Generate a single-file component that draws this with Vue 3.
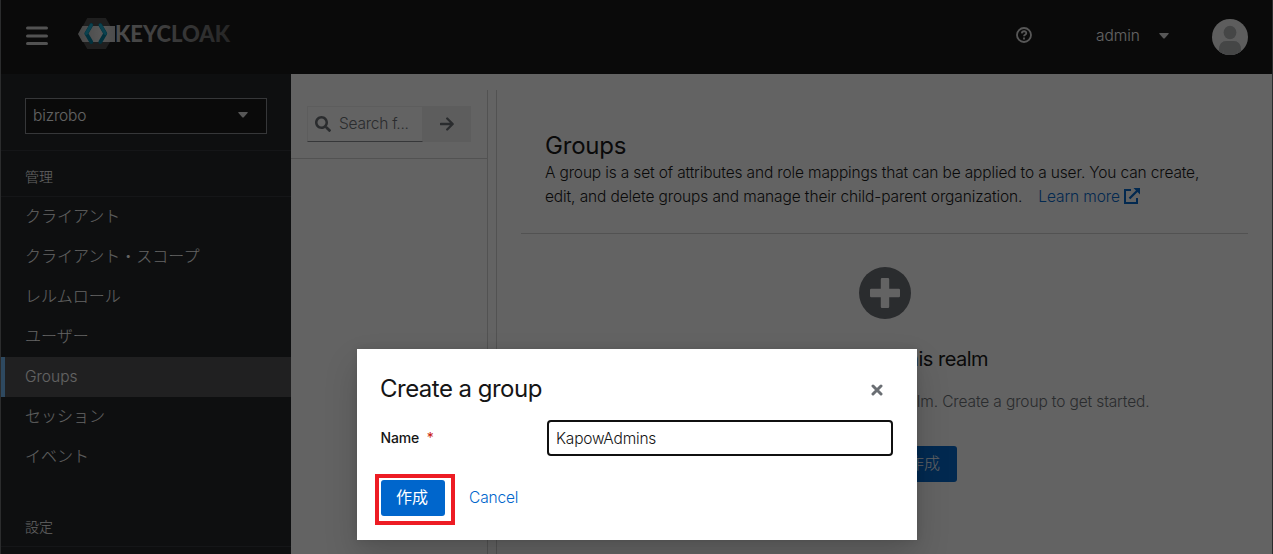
<script setup>
const manage = ['クライアント', 'クライアント・スコープ', 'レルムロール', 'ユーザー', 'Groups', 'セッション', 'イベント']
</script>

<template>
  <div class="page">
    <header class="masthead">
      <svg class="burger" width="22" height="20" viewBox="0 0 22 20"><path d="M1.5 2h19M1.5 10h19M1.5 17.500h19" /></svg>
      <svg class="logo" width="154" height="33" viewBox="0 0 154 33">
        <defs>
          <linearGradient id="word" x1="0" x2="1"><stop offset="0" stop-color="#c6c6c6" /><stop offset="1" stop-color="#5f5f5f" /></linearGradient>
          <linearGradient id="band" x1="0" x2="1"><stop offset="0" stop-color="#b5b5b5" /><stop offset=".6" stop-color="#e0e0e0" /><stop offset="1" stop-color="#c2c2c2" /></linearGradient>
        </defs>
        <path fill="#4d4d4d" d="M9.300 1h18.500L37 17 27.800 32H9.300L.5 17z" />
        <path fill="url(#band)" d="M4.500 9H37v16H4.500L0 17z" />
        <path fill="none" stroke="#007c9c" stroke-width="3.800" stroke-linejoin="round" stroke-linecap="round" d="M13.300 8 8.300 16.500l5 8.500M22.300 8l5 8.500-5 8.500" />
        <path fill="none" stroke="#1aa9cb" stroke-width="3" stroke-linecap="round" d="M13.300 8 8.300 16.500M22.300 8l5 8.500" />
        <text class="wordmark" x="37" y="25" textLength="115" lengthAdjust="spacingAndGlyphs" fill="url(#word)">KEYCLOAK</text>
      </svg>
      <div class="tools">
        <svg class="help" width="16" height="16" viewBox="0 0 16 16">
          <circle cx="8" cy="8" r="7" /><path d="M5.800 6.300c.3-2.800 4.600-2.600 4.500-.1 0 1.600-2.300 1.500-2.300 3" /><path d="M8 10.600v1.900" />
        </svg>
        <span class="user">admin</span>
        <svg class="caret" width="10" height="6" viewBox="0 0 10 6"><path d="M.7 0h8.600q.8.200.2 1L5.800 5.200q-.8.800-1.600 0L.5 1Q-.1.200.7 0z" /></svg>
        <svg class="avatar" width="36" height="36" viewBox="0 0 36 36">
          <defs><clipPath id="disc"><circle cx="18" cy="18" r="18" /></clipPath></defs>
          <circle cx="18" cy="18" r="18" fill="#f0f0f0" />
          <g clip-path="url(#disc)">
            <ellipse cx="18" cy="13.500" rx="6.400" ry="6.700" fill="#b0b2b4" />
            <path fill="#c4c6c8" d="M7 36v-5q0-9 8-9h6q8 0 8 9v5z" />
            <path fill="#b0b2b4" d="M7 36v-5q0-9 8-9h6q8 0 8 9v5h-3.500v-6l-1 6H12.500l-1-6v6z" />
          </g>
        </svg>
      </div>
    </header>

    <div class="body">
      <nav class="sidebar">
        <div class="realm-box">
          <div class="realm"><span class="realm-name">bizrobo</span>
            <svg class="caret" width="10" height="6" viewBox="0 0 10 6"><path d="M.7 0h8.600q.8.200.2 1L5.800 5.200q-.8.800-1.600 0L.5 1Q-.1.200.7 0z" /></svg>
          </div>
        </div>
        <h2 class="section">管理</h2>
        <ul class="items">
          <li v-for="item in manage" :key="item" :class="{ current: item === 'Groups' }">{{ item }}</li>
        </ul>
        <h2 class="section second">設定</h2>
      </nav>

      <aside class="tree">
        <div class="tree-head">
          <div class="search">
            <svg width="16" height="16" viewBox="0 0 512 512"><path d="M505 442.700L405.300 343c-4.500-4.500-10.600-7-17-7H372c27.600-35.300 44-79.700 44-128C416 93.100 322.900 0 208 0S0 93.100 0 208s93.100 208 208 208c48.300 0 92.700-16.400 128-44v16.300c0 6.400 2.500 12.500 7 17l99.700 99.700c9.400 9.400 24.600 9.400 33.900 0l28.300-28.300c9.400-9.400 9.400-24.600.1-34zM208 336c-70.700 0-128-57.200-128-128 0-70.700 57.200-128 128-128 70.700 0 128 57.200 128 128 0 70.700-57.200 128-128 128z" /></svg>
            <span>Search f...</span>
          </div>
          <div class="go">
            <svg width="14" height="14" viewBox="0 0 14 14"><path d="M.8 7H12M7.200 1.500 12.700 7l-5.500 5.500" /></svg>
          </div>
        </div>
      </aside>
      <div class="splitter"></div>

      <main class="main">
        <h1>Groups</h1>
        <p class="desc">
          <span class="lead">A group is a set of attributes and role mappings that can be applied to a user. You can create,</span><br>
          <span class="rest">edit, and delete groups and manage their child-parent organization.</span>
          <a class="learn">Learn more<svg width="16" height="16" viewBox="0 0 16 16"><path fill="none" stroke="currentColor" stroke-width="2" d="M7 2H1v13h12V10" /><path fill="none" stroke="currentColor" stroke-width="2.300" d="M5.500 10.500 13.500 2.500" /><path fill="currentColor" d="M9.500 0H16v6.500z" /></svg></a>
        </p>
        <hr>
        <section class="empty">
          <svg width="52" height="52" viewBox="0 0 52 52"><circle cx="26" cy="26" r="26" fill="#6a6e73" /><path fill="#fff" d="M23 11h6q1.200 0 1.200 1.200v9.600h9.600q1.200 0 1.200 1.200v6q0 1.200-1.200 1.200h-9.600v9.600q0 1.200-1.200 1.200h-6q-1.200 0-1.200-1.200v-9.600h-9.600Q11 30.200 11 29v-6q0-1.200 1.200-1.200h9.600v-9.600Q21.800 11 23 11z" /></svg>
          <h2>No groups in this realm</h2>
          <p>You haven't created any groups in this realm. Create a group to get started.</p>
          <button class="primary">グループの作成</button>
        </section>
      </main>
    </div>

    <div class="backdrop"></div>

    <div class="modal" role="dialog">
      <div class="modal-head">
        <h1>Create a group</h1>
        <svg width="12" height="12" viewBox="0 0 12 12"><path d="M2 2l8 8M10 2l-8 8" /></svg>
      </div>
      <div class="field">
        <label>Name <i>*</i></label>
        <div class="input">KapowAdmins</div>
      </div>
      <div class="actions">
        <button class="primary">作成</button>
        <a>Cancel</a>
      </div>
      <div class="marker"></div>
    </div>
  </div>
</template>

<style>
body { margin: 0; overflow: hidden; background: #222; }
</style>

<style scoped>
* { box-sizing: border-box; }
h1, h2, p, ul { margin: 0; padding: 0; font-weight: inherit; }
.page { position: relative; width: 1273px; height: 554px; overflow: hidden; padding: 0 1px; display: flex; flex-direction: column; background: #6d6f72; color: #151515; font: 300 16px/24px Inter, "Noto Sans CJK JP", sans-serif; white-space: nowrap; }
.masthead { flex: none; height: 74px; background: #151515; color: #fff; display: flex; align-items: center; padding: 0 24px 0 25px; }
.burger { fill: none; stroke: #d2d2d2; stroke-width: 3; stroke-linecap: round; margin-top: -2px; }
.logo { margin: -7px 0 0 30px; }
.wordmark { font: 900 22px Lato, sans-serif; }
.tools { margin-left: auto; display: flex; align-items: center; margin-top: -3px; }
.help { fill: none; stroke: #e0e0e0; stroke-width: 1.800; margin: -2px 64px 0 0; }
.user { font-size: 15.5px; width: 44px; margin-right: 19px; letter-spacing: -.05px; }
.caret { fill: #e0e0e0; }
.avatar { margin: 2px 0 0 43px; }
.body { flex: 1; display: flex; min-height: 0; background: #fff; }
.sidebar { flex: none; width: 290px; background: #212427; color: #fff; }
.realm-box { height: 77px; padding: 24px; border-bottom: 1px solid #33363a; }
.realm { height: 36px; background: #151515; border: 1px solid #8a8d90; display: flex; align-items: center; justify-content: space-between; padding: 0 18px 0 7px; }
.realm .caret { margin-top: -2px; }
.realm-name { font-size: 15.5px; letter-spacing: -.15px; }
.section { height: 46px; padding: 13px 24px 0; font-size: 14px; line-height: 26px; border-bottom: 1px solid #33363a; color: #fff; }
.items { list-style: none; }
.items li { height: 40px; padding: 7px 24px 0; line-height: 24px; }
.items .current { background: #4f5052; box-shadow: inset 4px 0 #73bcf7; font-size: 15.5px; padding-top: 8px; }
.second { margin-top: 24px; }
.tree { flex: none; width: 197px; margin-top: 16px; border-right: 1px solid #d2d2d2; }
.tree-head { height: 69px; padding: 16px 15px 16px 16px; display: flex; border-bottom: 1px solid #d2d2d2; }
.search { flex: none; width: 116px; height: 36px; border: 1px solid #f0f0f0; border-bottom-color: #8a8d90; display: flex; align-items: center; padding-left: 7px; gap: 8px; color: #6a6e73; }
.search svg { fill: #6a6e73; }
.search span { font-size: 15.5px; letter-spacing: -.25px; }
.go { flex: none; width: 48px; height: 36px; background: #f0f0f0; display: flex; align-items: center; justify-content: center; }
.go svg { fill: none; stroke: #6a6e73; stroke-width: 2.300; stroke-linecap: round; stroke-linejoin: round; }
.splitter { flex: none; width: 9px; margin-top: 16px; border-right: 1px solid #d2d2d2; }
.main { flex: 1; padding: 56px 24px 0; }
.main h1 { font-size: 24px; line-height: 31px; padding-left: 24px; font-weight: 400; letter-spacing: -.2px; }
.desc { padding-left: 24px; font-size: 15.500px; letter-spacing: -.07px; }
.lead { letter-spacing: -.15px; }
.rest { letter-spacing: -.11px; }
.learn { color: #06c; margin-left: 16px; display: inline-flex; align-items: center; gap: 4px; height: 24px; vertical-align: top; letter-spacing: -.12px; }
.learn svg { margin-top: -2px; }
hr { margin: 24px 0 33px; border: 0; height: 1px; background: #d2d2d2; }
.empty { display: flex; flex-direction: column; align-items: center; }
.empty h2 { font-size: 20px; line-height: 30px; margin-top: 25px; font-weight: 400; letter-spacing: -.5px; }
.empty p { color: #6a6e73; margin-top: 16px; font-size: 15.500px; letter-spacing: -.13px; }
button { border: 0; font: inherit; }
.primary { height: 36px; padding: 0 16px 2px; background: #06c; color: #fff; border-radius: 3px; }
.empty .primary { margin-top: 32px; width: 144px; padding-left: 0; padding-right: 0; }
.backdrop { position: absolute; inset: 0; background: rgba(3, 3, 3, .62); }
.modal { position: absolute; left: 357px; top: 349px; width: 560px; height: 191px; background: #fff; padding: 24px; box-shadow: 0 16px 32px rgba(3, 3, 3, .16), 0 0 8px rgba(3, 3, 3, .1); }
.modal-head { display: flex; justify-content: space-between; align-items: center; height: 31px; padding-right: 10px; }
.modal-head h1 { font-size: 24px; line-height: 31px; font-weight: 400; letter-spacing: -.52px; margin-left: -1px; }
.modal-head svg { fill: none; stroke: #6a6e73; stroke-width: 3; stroke-linecap: round; margin-top: 3px; }
.field { display: flex; margin-top: 16px; align-items: center; justify-content: space-between; }
label { font-size: 14px; font-weight: 500; letter-spacing: -.15px; margin-left: -.5px; }
label i { color: #c9190b; font-style: normal; font-weight: 400; margin-left: 4px; }
.input { width: 346px; height: 36px; border: 2px solid #101010; border-radius: 4px; padding: 5px 7px; font-size: 15.500px; letter-spacing: -.2px; }
.actions { display: flex; align-items: center; gap: 24px; margin-top: 24px; }
.actions .primary { padding-left: 15px; padding-right: 17px; font-weight: 400; }
.actions a { color: #06c; font-size: 15.500px; letter-spacing: -.15px; }
.marker { position: absolute; left: 18px; top: 125px; width: 80px; height: 51px; border: 4px solid #ed1c24; }
</style>
